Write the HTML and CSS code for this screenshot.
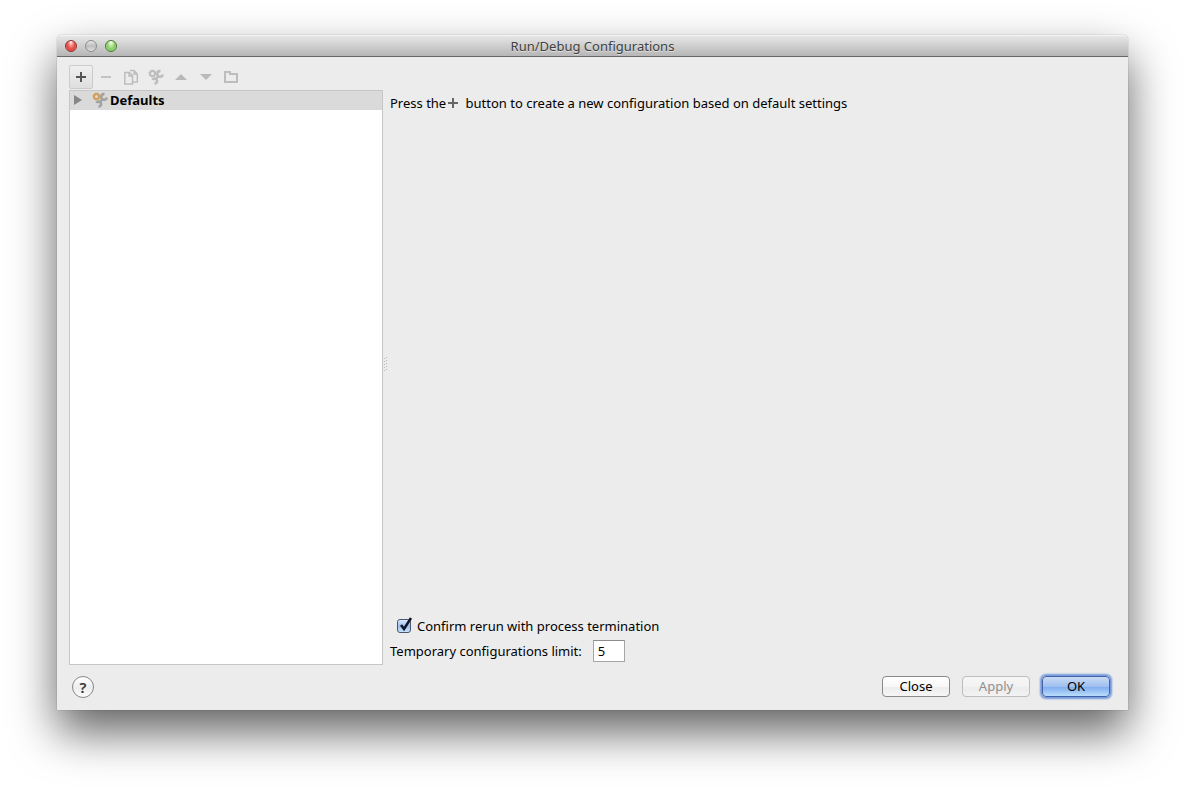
FILE: index.html
```html
<!DOCTYPE html>
<html lang="en">

<head>
    <meta charset="UTF-8">
    <meta name="viewport" content="width=device-width, initial-scale=1.0">
    <title>Run/Debug Configurations</title>
    <link rel="stylesheet" href="styles.css">
</head>
<body>
    <svg class="defs" width="0" height="0" aria-hidden="true">
        <symbol id="wrench" viewBox="0 0 16 16">
            <path class="tool" d="M12.5 2.2A2.8 2.8 0 1 0 14.8 5.5M10.5 7 7.5 10.5M4.5 11A2.4 2.4 0 1 1 6.5 14.5" fill="none" stroke-width="2.6"/>
            <circle class="hub" cx="4.5" cy="4.5" r="2.5" fill="none" stroke-width="2"/>
            <circle class="teeth" cx="4.5" cy="4.5" r="3.6" fill="none" stroke-width="1" stroke-dasharray="1.4 1.4"/>
        </symbol>
    </svg>

    <div class="window">
        <header class="titlebar">
            <div class="lights">
                <button type="button" class="light red" aria-label="Close window"></button>
                <button type="button" class="light gray" aria-label="Minimize window"></button>
                <button type="button" class="light green" aria-label="Zoom window"></button>
            </div>
            <h1 class="title">Run/Debug Configurations</h1>
        </header>

        <main class="content">
            <section class="sidebar">
                <div class="toolbar">
                    <button type="button" class="tool-button active" aria-label="Add">
                        <svg width="16" height="16"><path d="M3 8h10M8 3v10" stroke="#555" stroke-width="2"/></svg>
                    </button>
                    <button type="button" class="tool-button" aria-label="Remove" disabled>
                        <svg width="16" height="16"><path d="M3 8h10" stroke="#c3c3c3" stroke-width="2"/></svg>
                    </button>
                    <button type="button" class="tool-button" aria-label="Copy" disabled>
                        <svg width="16" height="16" fill="none" stroke="#bdbdbd" stroke-width="1.5"><path d="M1.800 3.500H6.500L9.500 6.500V15H1.800zM6 3.500v3.500h3.500M7 1.500h4L14.300 5v8H10M11 1.500V5h3"/></svg>
                    </button>
                    <button type="button" class="tool-button" aria-label="Edit defaults" disabled>
                        <svg class="muted" width="16" height="16"><use href="#wrench"/></svg>
                    </button>
                    <button type="button" class="tool-button" aria-label="Move up" disabled>
                        <svg width="16" height="16"><path d="M2 11 8 5l6 6z" fill="#b9b9b9"/></svg>
                    </button>
                    <button type="button" class="tool-button" aria-label="Move down" disabled>
                        <svg width="16" height="16"><path d="M2 5h12l-6 6z" fill="#b9b9b9"/></svg>
                    </button>
                    <button type="button" class="tool-button" aria-label="New folder" disabled>
                        <svg width="16" height="16"><path d="M2 13V3h5v2h7v8z" fill="none" stroke="#bdbdbd" stroke-width="2"/></svg>
                    </button>
                </div>
                <ul class="tree">
                    <li class="tree-row">
                        <svg width="10" height="10"><path d="M1 0v10l8-5z" fill="#868686"/></svg>
                        <svg class="colored" width="16" height="16"><use href="#wrench"/></svg>
                        <span>Defaults</span>
                    </li>
                </ul>
            </section>

            <div class="splitter">
                <svg width="5" height="15" fill="#bababa"><path d="M0 1h1v1H0zM2 0h1v1H2zM0 4h1v1H0zM2 3h1v1H2zM0 7h1v1H0zM2 6h1v1H2zM0 10h1v1H0zM2 9h1v1H2zM0 13h1v1H0zM2 12h1v1H2z"/></svg>
            </div>

            <section class="details">
                <p class="hint">Press the<svg width="12" height="12"><path d="M1 6h10M6 1v10" stroke="#666" stroke-width="2"/></svg> button to create a new configuration based on default settings</p>
                <div class="options">
                    <label class="confirm">
                        <span class="box">
                            <input type="checkbox" checked>
                            <svg class="tick" width="16" height="17"><path d="M4 9 7 13 14 2" fill="none" stroke="#101828" stroke-width="2.5"/></svg>
                        </span>
                        Confirm rerun with process termination
                    </label>
                    <div class="limit">
                        <label for="limit">Temporary configurations limit:</label>
                        <input type="text" id="limit" value="5">
                    </div>
                </div>
            </section>
        </main>

        <footer class="footer">
            <button type="button" class="help" aria-label="Help">?</button>
            <div class="actions">
                <button type="button" class="button">Close</button>
                <button type="button" class="button" disabled>Apply</button>
                <button type="button" class="button primary">OK</button>
            </div>
        </footer>
    </div>
</body>

</html>
```
FILE: styles.css
```css
* {
    box-sizing: border-box;
}

body {
    margin: 0;
    padding: 35px 57px 79px;
    min-height: 100vh;
    display: flex;
    background: #fff;
    color: #000;
    font-family: "Noto Sans", sans-serif;
    font-size: 13px;
    line-height: 18px;
}

button,
input {
    font: inherit;
    color: inherit;
}

svg {
    display: block;
    flex: none;
}

.defs {
    position: absolute;
}

.window {
    flex: 1;
    display: flex;
    flex-direction: column;
    background: #ececec;
    border-radius: 5px 5px 0 0;
    box-shadow: 0 0 1px rgba(0, 0, 0, 0.6), 0 22px 46px rgba(0, 0, 0, 0.62);
}

.titlebar {
    display: grid;
    grid-template-columns: 1fr auto 1fr;
    align-items: center;
    height: 22px;
    padding: 0 8px;
    border-top: 1px solid #f4f4f4;
    border-bottom: 1px solid #686868;
    border-radius: 5px 5px 0 0;
    background: linear-gradient(#e6e6e6, #b6b6b6);
}

.lights {
    display: flex;
    gap: 8px;
}

.light {
    width: 12px;
    height: 12px;
    padding: 0;
    border: 1px solid #777;
    border-radius: 50%;
}

.red {
    border-color: #90302e;
    background: radial-gradient(ellipse at 50% 10%, #fff 0, #f59a96 25%, #e2443f 60%, #ff9a94 100%);
}

.gray {
    border-color: #8b8b8b;
    background: linear-gradient(#e8e8e8, #bcbcbc 50%, #e2e2e2);
}

.green {
    border-color: #477a30;
    background: radial-gradient(ellipse at 50% 10%, #fff 0, #bfe8a4 30%, #84cb62 60%, #d2fab0 100%);
}

.title {
    margin: 0;
    font-size: 13px;
    font-weight: normal;
    color: #404040;
    text-shadow: 0 1px 0 rgba(255, 255, 255, 0.5);
}

.content {
    flex: 1;
    display: flex;
    padding: 8px 12px 0;
}

.sidebar {
    display: flex;
    flex-direction: column;
    width: 314px;
}

.toolbar {
    display: flex;
    gap: 1px;
    height: 25px;
}

.tool-button {
    display: grid;
    place-items: center;
    width: 24px;
    height: 24px;
    padding: 0;
    border: 1px solid transparent;
    border-radius: 2px;
    background: none;
}

.active {
    border-color: #cbcbcb;
    background: linear-gradient(#f0f0f0, #dedede);
}

.muted {
    --gear: #bdbdbd;
    --tool: #bdbdbd;
}

.colored {
    --gear: #cf9f5a;
    --tool: #a2a2a2;
    margin: 0 2px 0 9px;
}

.tool {
    stroke: var(--tool);
}

.hub,
.teeth {
    stroke: var(--gear);
}

.tree {
    flex: 1;
    margin: 0;
    padding: 0;
    list-style: none;
    background: #fff;
    border: 1px solid #c6c6c6;
}

.tree-row {
    display: flex;
    align-items: center;
    height: 19px;
    padding: 0 0 1px 3px;
    background: #dadada;
    font-weight: bold;
}

.splitter {
    display: flex;
    align-items: center;
    width: 7px;
    padding: 0 0 2px 1px;
}

.details {
    flex: 1;
    display: flex;
    flex-direction: column;
    justify-content: space-between;
    padding: 29px 0 3px;
}

.hint {
    margin: 0;
}

.hint svg {
    display: inline-block;
    margin: 0 3px 0 1px;
    vertical-align: -1px;
}

.confirm {
    display: flex;
    align-items: center;
    gap: 4px;
    padding-left: 7px;
    margin-bottom: 5px;
}

.box {
    position: relative;
    width: 16px;
    height: 14px;
}

.box input {
    appearance: none;
    display: block;
    width: 14px;
    height: 14px;
    margin: 0;
    border: 1px solid #4c566c;
    border-radius: 3px;
    background: linear-gradient(#dbe8fb, #9dbdf0 50%, #c8e2fb);
}

.tick {
    position: absolute;
    left: 0;
    bottom: 0;
    display: none;
    pointer-events: none;
}

.box input:checked + .tick {
    display: block;
}

.limit {
    display: flex;
    align-items: center;
    gap: 11px;
}

.limit input {
    width: 32px;
    height: 22px;
    padding: 0 4px;
    border: 1px solid #a6a6a6;
    border-top-color: #8c8c8c;
    background: #fff;
}

.footer {
    display: flex;
    align-items: flex-start;
    justify-content: space-between;
    padding: 11px 18px 12px 15px;
}

.help {
    width: 22px;
    height: 22px;
    padding: 0;
    border: 1px solid #878787;
    border-radius: 50%;
    background: linear-gradient(#fff, #ececec 55%, #fdfdfd);
    font-size: 15px;
    font-weight: 600;
    line-height: 18px;
    color: #333;
}

.actions {
    display: flex;
    gap: 12px;
}

.button {
    width: 68px;
    height: 21px;
    padding: 0 0 1px;
    border: 1px solid #8a8a8a;
    border-radius: 4px;
    background: linear-gradient(#fff, #f8f8f8 50%, #ececec 51%, #f6f6f6);
    line-height: 18px;
}

.button:disabled {
    border-color: #bcbcbc;
    background: linear-gradient(#f6f6f6, #f2f2f2 50%, #ebebeb 51%, #f2f2f2);
    color: #8f8f8f;
}

.primary {
    border-color: #4560a6;
    background: linear-gradient(#c9daf5, #9fc0f0 50%, #7daaef 51%, #b9defa);
    box-shadow: 0 0 2px 2px #7098dc;
}
```
